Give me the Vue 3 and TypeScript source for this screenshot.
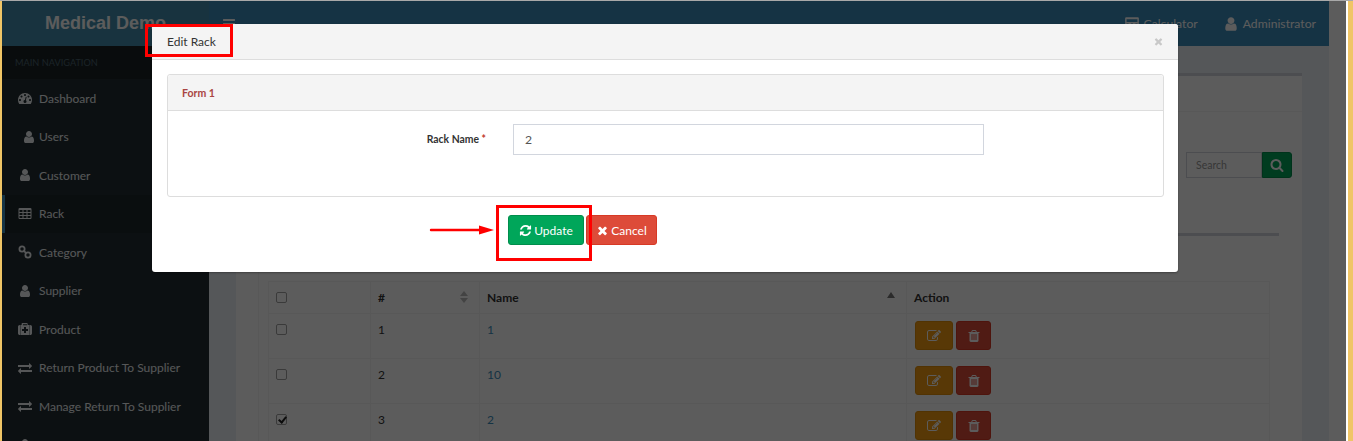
<script setup lang="ts">
const P: Record<string, string> = {
  user: 'M1536 1399q0 109-62.5 187t-150.5 78h-854q-88 0-150.5-78t-62.5-187q0-85 8.5-160.5t31.5-152 58.5-131 94-89 134.5-34.5q131 128 313 128t313-128q76 0 134.5 34.5t94 89 58.5 131 31.5 152 8.5 160.5zm-256-887q0 159-112.5 271.5t-271.5 112.5-271.5-112.5-112.5-271.5 112.5-271.5 271.5-112.5 271.5 112.5 112.5 271.5z',
  search: 'M1216 832q0-185-131.5-316.5t-316.5-131.5-316.5 131.5-131.5 316.5 131.5 316.5 316.5 131.5 316.5-131.5 131.5-316.5zm512 832q0 52-38 90t-90 38q-54 0-90-38l-343-342q-179 124-399 124-143 0-273.5-55.5t-225-150-150-225-55.5-273.5 55.5-273.5 150-225 225-150 273.5-55.5 273.5 55.5 225 150 150 225 55.5 273.5q0 220-124 399l343 343q37 37 37 90z',
  bars: 'M1664 1344v128q0 26-19 45t-45 19h-1408q-26 0-45-19t-19-45v-128q0-26 19-45t45-19h1408q26 0 45 19t19 45zm0-512v128q0 26-19 45t-45 19h-1408q-26 0-45-19t-19-45v-128q0-26 19-45t45-19h1408q26 0 45 19t19 45zm0-512v128q0 26-19 45t-45 19h-1408q-26 0-45-19t-19-45v-128q0-26 19-45t45-19h1408q26 0 45 19t19 45z',
  times: 'M1490 1322q0 40-28 68l-136 136q-28 28-68 28t-68-28l-294-294-294 294q-28 28-68 28t-68-28l-136-136q-28-28-28-68t28-68l294-294-294-294q-28-28-28-68t28-68l136-136q28-28 68-28t68 28l294 294 294-294q28-28 68-28t68 28l136 136q28 28 28 68t-28 68l-294 294 294 294q28 28 28 68z',
  refresh: 'M1639 1056q0 5-1 7-64 268-268 434.5t-478 166.5q-146 0-282.5-55t-243.5-157l-129 129q-19 19-45 19t-45-19-19-45v-448q0-26 19-45t45-19h448q26 0 45 19t19 45-19 45l-137 137q71 66 161 102t187 36q134 0 250-65t186-179q11-17 53-117 8-23 30-23h192q13 0 22.5 9.5t9.5 22.5zm25-800v448q0 26-19 45t-45 19h-448q-26 0-45-19t-19-45 19-45l138-138q-148-137-349-137-134 0-250 65t-186 179q-11 17-53 117-8 23-30 23h-199q-13 0-22.5-9.5t-9.5-22.5v-7q65-268 270-434.5t480-166.5q146 0 284 55.5t245 156.5l130-129q19-19 45-19t45 19 19 45z',
  exchange: 'M1792 1184v192q0 13-9.5 22.5t-22.5 9.5h-1376v192q0 13-9.5 22.5t-22.5 9.5q-12 0-24-10l-319-320q-9-9-9-22 0-14 9-23l320-320q9-9 23-9 13 0 22.5 9.5t9.5 22.5v192h1376q13 0 22.5 9.5t9.5 22.5zm0-544q0 14-9 23l-320 320q-9 9-23 9-13 0-22.5-9.5t-9.5-22.5v-192h-1376q-13 0-22.5-9.5t-9.5-22.5v-192q0-13 9.5-22.5t22.5-9.5h1376v-192q0-14 9-23t23-9q12 0 24 10l319 319q9 9 9 23z',
  trash: 'M704 1376v-704q0-14-9-23t-23-9h-64q-14 0-23 9t-9 23v704q0 14 9 23t23 9h64q14 0 23-9t9-23zm256 0v-704q0-14-9-23t-23-9h-64q-14 0-23 9t-9 23v704q0 14 9 23t23 9h64q14 0 23-9t9-23zm256 0v-704q0-14-9-23t-23-9h-64q-14 0-23 9t-9 23v704q0 14 9 23t23 9h64q14 0 23-9t9-23zm-544-992h448l-48-117q-7-9-17-11h-317q-10 2-17 11zm928 32v64q0 14-9 23t-23 9h-96v948q0 83-47 143.5t-113 60.5h-832q-66 0-113-58.5t-47-141.5v-952h-96q-14 0-23-9t-9-23v-64q0-14 9-23t23-9h309l70-167q15-37 54-63t79-26h320q40 0 79 26t54 63l70 167h309q14 0 23 9t9 23z',
  edit: 'M888 1184l116-116-152-152-116 116v56h96v96h56zm440-720q-16-16-33 1l-350 350q-17 17-1 33t33-1l350-350q17-17 1-33zm80 594v190q0 119-84.5 203.5t-203.5 84.5h-832q-119 0-203.5-84.5t-84.5-203.5v-832q0-119 84.5-203.5t203.5-84.5h832q63 0 117 25 15 7 18 23 3 17-9 29l-49 49q-14 14-32 8-23-6-45-6h-832q-66 0-113 47t-47 113v832q0 66 47 113t113 47h832q66 0 113-47t47-113v-126q0-13 9-22l64-64q15-15 35-7t20 29zm-96-738l288 288-672 672h-288v-288zm444 132l-92 92-288-288 92-92q28-28 68-28t68 28l152 152q28 28 28 68t-28 68z',
  table: 'M576 1376v-192q0-14-9-23t-23-9h-320q-14 0-23 9t-9 23v192q0 14 9 23t23 9h320q14 0 23-9t9-23zm0-384v-192q0-14-9-23t-23-9h-320q-14 0-23 9t-9 23v192q0 14 9 23t23 9h320q14 0 23-9t9-23zm512 384v-192q0-14-9-23t-23-9h-320q-14 0-23 9t-9 23v192q0 14 9 23t23 9h320q14 0 23-9t9-23zm-512-768v-192q0-14-9-23t-23-9h-320q-14 0-23 9t-9 23v192q0 14 9 23t23 9h320q14 0 23-9t9-23zm512 384v-192q0-14-9-23t-23-9h-320q-14 0-23 9t-9 23v192q0 14 9 23t23 9h320q14 0 23-9t9-23zm512 384v-192q0-14-9-23t-23-9h-320q-14 0-23 9t-9 23v192q0 14 9 23t23 9h320q14 0 23-9t9-23zm-512-768v-192q0-14-9-23t-23-9h-320q-14 0-23 9t-9 23v192q0 14 9 23t23 9h320q14 0 23-9t9-23zm512 384v-192q0-14-9-23t-23-9h-320q-14 0-23 9t-9 23v192q0 14 9 23t23 9h320q14 0 23-9t9-23zm0-384v-192q0-14-9-23t-23-9h-320q-14 0-23 9t-9 23v192q0 14 9 23t23 9h320q14 0 23-9t9-23zm128-320v1088q0 66-47 113t-113 47h-1344q-66 0-113-47t-47-113v-1088q0-66 47-113t113-47h1344q66 0 113 47t47 113z',
  medkit: 'M1280 1120v-192q0-14-9-23t-23-9h-224v-224q0-14-9-23t-23-9h-192q-14 0-23 9t-9 23v224h-224q-14 0-23 9t-9 23v192q0 14 9 23t23 9h224v224q0 14 9 23t23 9h192q14 0 23-9t9-23v-224h224q14 0 23-9t9-23zm-640-704h512v-128h-512v128zm1152 192v832q0 92-66 158t-158 66h-32v-1280h32q92 0 158 66t66 158zm-304-224v1280h-1184v-1280h160v-160q0-40 28-68t68-28h576q40 0 68 28t28 68v160h256zm-1232 0v1280h-32q-92 0-158-66t-66-158v-832q0-92 66-158t158-66h32z',
  dashboard: 'M384 1152q0-53-37.5-90.5t-90.5-37.5-90.5 37.5-37.5 90.5 37.5 90.5 90.5 37.5 90.5-37.5 37.5-90.5zm192-448q0-53-37.5-90.5t-90.5-37.5-90.5 37.5-37.5 90.5 37.5 90.5 90.5 37.5 90.5-37.5 37.5-90.5zm428 481l101-382q6-26-7.5-48.5t-38.5-29.5-48 6.5-30 39.5l-101 382q-60 5-107 43.5t-63 98.5q-20 77 20 146t117 89 146-20 89-117q16-60-6-117t-72-91zm660-33q0-53-37.5-90.5t-90.5-37.5-90.5 37.5-37.5 90.5 37.5 90.5 90.5 37.5 90.5-37.5 37.5-90.5zm-640-640q0-53-37.5-90.5t-90.5-37.5-90.5 37.5-37.5 90.5 37.5 90.5 90.5 37.5 90.5-37.5 37.5-90.5zm448 192q0-53-37.5-90.5t-90.5-37.5-90.5 37.5-37.5 90.5 37.5 90.5 90.5 37.5 90.5-37.5 37.5-90.5zm320 448q0 261-141 483-19 29-54 29h-1402q-35 0-54-29-141-221-141-483 0-182 71-348t191-286 286-191 348-71 348 71 286 191 191 286 71 348z',
  calculator: 'M128 256q0-53 37-90t91-38h1280q53 0 90 38t38 90v1280q0 53-38 90t-90 38h-1280q-54 0-91-38t-37-90zm160 96v320h1216v-320zm0 480v160h224v-160zm0 288v160h224v-160zm0 288v128h224v-128zm496-576v160h224v-160zm0 288v160h224v-160zm0 288v128h224v-128zm496-576v160h224v-160zm0 288v160h224v-160zm0 288v128h224v-128z',
};

const nav = [
  { label: 'Dashboard', icon: 'dashboard' },
  { label: 'Users', icon: 'user', indent: true },
  { label: 'Customer', icon: 'user' },
  { label: 'Rack', icon: 'table', active: true },
  { label: 'Category', icon: 'link' },
  { label: 'Supplier', icon: 'user' },
  { label: 'Product', icon: 'medkit' },
  { label: 'Return Product To Supplier', icon: 'exchange' },
  { label: 'Manage Return To Supplier', icon: 'exchange' },
  { label: '', icon: 'user' },
];

const rows = [
  { id: 1, name: '1', checked: false },
  { id: 2, name: '10', checked: false },
  { id: 3, name: '2', checked: true },
];
</script>

<template>
  <div class="page">
    <div class="app">
      <header class="topbar">
        <div class="logo">Medical Demo</div>
        <button class="toggle" type="button">
          <svg class="ic" viewBox="0 0 1792 1792"><path :d="P.bars" /></svg>
        </button>
        <div class="top-links">
          <span class="top-link">
            <svg class="ic" viewBox="0 0 1792 1792"><path fill-rule="evenodd" :d="P.calculator" /></svg>
            Calculator
          </span>
          <span class="top-link">
            <svg class="ic" viewBox="0 0 1792 1792"><path :d="P.user" /></svg>
            Administrator
          </span>
        </div>
      </header>
      <div class="columns">
        <aside class="sidebar">
          <div class="nav-title">MAIN NAVIGATION</div>
          <ul class="nav">
            <li v-for="n in nav" :key="n.label" class="nav-item" :class="{ active: n.active, indent: n.indent }">
              <svg v-if="n.icon === 'link'" class="nav-ic" viewBox="0 0 16 16">
                <g fill="none" stroke="currentColor" stroke-width="2">
                  <circle cx="4.6" cy="4.6" r="3" />
                  <circle cx="11.4" cy="11.4" r="3" />
                  <path d="M6.5 6.5l3 3" />
                </g>
              </svg>
              <svg v-else class="nav-ic" viewBox="0 0 1792 1792"><path fill-rule="evenodd" :d="P[n.icon]" /></svg>
              <span>{{ n.label }}</span>
            </li>
          </ul>
        </aside>
        <main class="content">
          <section class="box">
            <div class="box-head"></div>
            <div class="box-body">
              <div class="search">
                <input class="search-input" placeholder="Search" />
                <button class="search-btn" type="button">
                  <svg class="ic" viewBox="0 0 1792 1792"><path :d="P.search" /></svg>
                </button>
              </div>
              <div class="tab-panel">
                <table class="grid">
                  <colgroup>
                    <col class="c1" /><col class="c2" /><col class="c3" /><col />
                  </colgroup>
                  <thead>
                    <tr>
                      <th><input type="checkbox" class="cb" /></th>
                      <th><div class="th-in"># <span class="sort both"></span></div></th>
                      <th><div class="th-in">Name <span class="sort up"></span></div></th>
                      <th>Action</th>
                    </tr>
                  </thead>
                  <tbody>
                    <tr v-for="r in rows" :key="r.id">
                      <td><input type="checkbox" class="cb" :checked="r.checked" /></td>
                      <td>{{ r.id }}</td>
                      <td class="name-cell">{{ r.name }}</td>
                      <td class="actions">
                        <div class="act-row">
                          <button class="act edit" type="button">
                            <svg class="ic" viewBox="0 0 1792 1792"><path :d="P.edit" /></svg>
                          </button>
                          <button class="act del" type="button">
                            <svg class="ic" viewBox="0 0 1792 1792"><path :d="P.trash" /></svg>
                          </button>
                        </div>
                      </td>
                    </tr>
                  </tbody>
                </table>
              </div>
            </div>
          </section>
        </main>
        <div class="gutter"></div>
      </div>
    </div>

    <div class="backdrop"></div>

    <div class="modal">
      <div class="modal-head">
        <span class="modal-title">Edit Rack</span>
        <svg class="close" viewBox="0 0 1792 1792"><path :d="P.times" /></svg>
      </div>
      <div class="panel">
        <div class="panel-head">Form 1</div>
        <div class="panel-body">
          <label class="field-label">Rack Name <em>*</em></label>
          <input class="field" value="2" />
        </div>
      </div>
      <div class="modal-actions">
        <button class="btn update" type="button">
          <svg class="ic" viewBox="0 0 1792 1792"><path :d="P.refresh" /></svg>Update
        </button>
        <button class="btn cancel" type="button">
          <svg class="ic" viewBox="0 0 1792 1792"><path :d="P.times" /></svg>Cancel
        </button>
      </div>
    </div>

    <div class="mark mark-title"></div>
    <div class="mark mark-update"></div>
    <svg class="arrow" viewBox="0 0 70 12">
      <path d="M2 6h50" stroke="#f00" stroke-width="2.4" stroke-linecap="round" fill="none" />
      <path d="M50 1.5L65 6L50 10.5z" fill="#f00" />
    </svg>
  </div>
</template>

<style>
html, body { margin: 0; padding: 0; overflow: hidden; }
</style>

<style scoped>
.page {
  position: relative;
  width: 1353px;
  height: 441px;
  box-sizing: border-box;
  border-top: 1px solid #a9a9a9;
  overflow: hidden;
  background: #f0c566;
  font-family: Lato, "Liberation Sans", sans-serif;
  font-size: 12px;
  color: #333;
}
.app {
  width: 1344px;
  height: 440px;
  margin: 0 0 0 2px;
  background: #fff;
  overflow: hidden;
  display: flex;
  flex-direction: column;
  border-right: 2px solid #fff;
  box-sizing: content-box;
}
.ic { width: 14px; height: 14px; fill: currentColor; flex: none; }

.topbar {
  display: flex;
  align-items: center;
  height: 45px;
  width: 1327px;
  flex: none;
  background: #3c8dbc;
  color: #fff;
}
.logo {
  width: 207px;
  height: 45px;
  box-sizing: border-box;
  padding-left: 43px;
  background: #438fae;
  font: bold 18px/45px "Liberation Sans", sans-serif;
  white-space: nowrap;
}
.toggle {
  border: 0;
  background: none;
  color: #fff;
  padding: 0 0 0 13px;
  display: flex;
}
.top-links { margin-left: auto; display: flex; gap: 25px; padding-right: 13px; font-size: 12.2px; }
.top-link { display: flex; align-items: center; gap: 4px; }
.top-link .ic { width: 16px; height: 16px; }

.columns { display: flex; flex: 1; min-height: 0; }
.sidebar { width: 207px; flex: none; background: #222d32; color: #eef2f4; }
.nav-title {
  height: 33px;
  box-sizing: border-box;
  padding-left: 13px;
  background: #1a2226;
  color: #4b646f;
  font-size: 9.2px;
  line-height: 33px;
  letter-spacing: 0;
}
.nav { list-style: none; margin: 0; padding: 0; }
.nav-item {
  display: flex;
  align-items: center;
  height: 38.5px;
  padding-left: 16px;
  gap: 7px;
  font-size: 12px;
  white-space: nowrap;
}
.nav-item.indent { padding-left: 20px; gap: 3px; }
.nav-item.active { border-left: 3px solid #3c8dbc; padding-left: 13px; background: #1e282c; }
.nav-ic { width: 14px; height: 14px; fill: currentColor; flex: none; }

.content { width: 1120px; flex: none; background: #ecf0f5; overflow: hidden; }
.gutter { flex: 1; background: #fff; }
.box {
  margin: 27px 27px 0;
  background: #fff;
  border-top: 3px solid #d2d6de;
  height: 400px;
}
.box-head { height: 36px; border-bottom: 1px solid #f4f4f4; box-sizing: border-box; }
.box-body { padding: 40px 10px 0; }
.search { display: flex; justify-content: flex-end; height: 26px; }
.search-input {
  width: 76px;
  height: 26px;
  box-sizing: border-box;
  border: 1px solid #d2d6de;
  padding: 0 9px;
  font: 10.5px Lato, sans-serif;
  outline: 0;
}
.search-input::placeholder { color: #999; }
.search-btn {
  width: 30px;
  height: 26px;
  border: 1px solid #008d4c;
  border-radius: 0 3px 3px 0;
  background: #00a65a;
  color: #fff;
  display: flex;
  align-items: center;
  justify-content: center;
  padding: 0;
}
.tab-panel {
  margin: 55px 13px 0 12px;
  border-top: 3px solid #d2d6de;
  border-left: 1px solid #f4f4f4;
  padding: 45px 9px 0 9px;
}
.grid {
  width: 1002px;
  table-layout: fixed;
  border-collapse: collapse;
  font-size: 12px;
}
.c1 { width: 102px; }
.c2 { width: 109px; }
.c3 { width: 427px; }
.grid th, .grid td {
  border: 1px solid #f4f4f4;
  padding: 8px 7px 0;
  text-align: left;
  vertical-align: top;
  box-sizing: border-box;
}
.grid th { height: 32px; font-weight: bold; line-height: 16px; color: #333; }
.grid td { height: 45px; line-height: 16px; }
.th-in { display: flex; justify-content: space-between; align-items: flex-start; padding-right: 4px; }
.name-cell { color: #3c8dbc; }
.cb {
  appearance: none;
  position: relative;
  width: 11px;
  height: 11px;
  margin: 2px 0 0;
  display: block;
  box-sizing: border-box;
  background: #fff;
  border: 1px solid #a0a0a0;
  border-radius: 2px;
}
.cb:checked::after {
  content: "";
  position: absolute;
  left: 2.5px;
  top: 0;
  width: 3px;
  height: 6px;
  border: solid #222;
  border-width: 0 2px 2px 0;
  transform: rotate(40deg);
}
.sort { display: block; width: 0; height: 0; border-left: 4px solid transparent; border-right: 4px solid transparent; margin-top: 2px; }
.sort.up { border-bottom: 6px solid #777; }
.sort.both { border-bottom: 5px solid #bbb; margin-top: 1px; position: relative; }
.sort.both::after {
  content: "";
  display: block;
  position: absolute;
  left: -4px;
  top: 7px;
  border-left: 4px solid transparent;
  border-right: 4px solid transparent;
  border-top: 5px solid #bbb;
}
.grid td.actions { padding: 7px 7px 0 8px; }
.act-row { display: flex; gap: 3px; }
.act {
  height: 29px;
  border-radius: 3px;
  border: 1px solid transparent;
  color: #fff;
  display: flex;
  align-items: center;
  justify-content: center;
  padding: 0;
}
.act.edit { width: 38px; background: #f39c12; border-color: #e08e0b; }
.act.del { width: 35px; background: #dd4b39; border-color: #d73925; }

.backdrop {
  position: absolute;
  left: 2px;
  top: 0;
  width: 1344px;
  height: 440px;
  background: rgba(0, 0, 0, 0.64);
}

.modal {
  position: absolute;
  left: 152px;
  top: 23px;
  width: 1026px;
  height: 248px;
  background: #fff;
  border-radius: 3px;
  box-shadow: 0 1px 2px rgba(0, 0, 0, 0.3);
}
.modal-head {
  height: 36px;
  box-sizing: border-box;
  background: #f4f4f4;
  border-bottom: 1px solid #ddd;
  border-radius: 3px 3px 0 0;
  display: flex;
  align-items: center;
  justify-content: space-between;
  padding: 0 14px 0 15px;
}
.modal-title { font-size: 12px; color: #333; }
.close { width: 11px; height: 11px; fill: #c8c8c8; }
.panel {
  margin: 14px 14px 0 15px;
  height: 123px;
  box-sizing: border-box;
  border: 1px solid #ddd;
  border-radius: 3px;
}
.panel-head {
  height: 36px;
  box-sizing: border-box;
  background: #f4f4f4;
  border-bottom: 1px solid #ddd;
  border-radius: 3px 3px 0 0;
  padding-left: 14px;
  font-size: 10.5px;
  font-weight: bold;
  line-height: 36px;
  color: #a94442;
}
.panel-body { display: flex; align-items: flex-start; padding: 13px 0 0; }
.field-label {
  width: 318px;
  text-align: right;
  font-size: 10.4px;
  font-weight: bold;
  line-height: 31px;
  color: #333;
}
.field-label em { color: #c0392b; font-style: normal; }
.field {
  margin-left: 27px;
  width: 471px;
  height: 31px;
  box-sizing: border-box;
  border: 1px solid #d2d6de;
  padding: 0 11px;
  font: 12.2px Lato, sans-serif;
  color: #555;
  outline: 0;
}
.modal-actions { display: flex; gap: 2px; padding: 18px 0 0 356px; }
.btn {
  height: 30px;
  box-sizing: border-box;
  border-radius: 3px;
  border: 1px solid transparent;
  color: #fff;
  font: 12px Lato, sans-serif;
  display: flex;
  align-items: center;
  justify-content: center;
  gap: 2px;
  padding: 0;
}
.btn .ic { width: 13px; height: 13px; }
.update { width: 76px; background: #00a65a; border-color: #008d4c; }
.cancel { width: 71px; background: #dd4b39; border-color: #d73925; }

.mark { position: absolute; border: 3px solid #f00; box-sizing: border-box; }
.mark-title { left: 145px; top: 23px; width: 88px; height: 33px; }
.mark-update { left: 496px; top: 204px; width: 96px; height: 56px; }
.arrow { position: absolute; left: 429px; top: 223px; width: 70px; height: 12px; }
</style>
